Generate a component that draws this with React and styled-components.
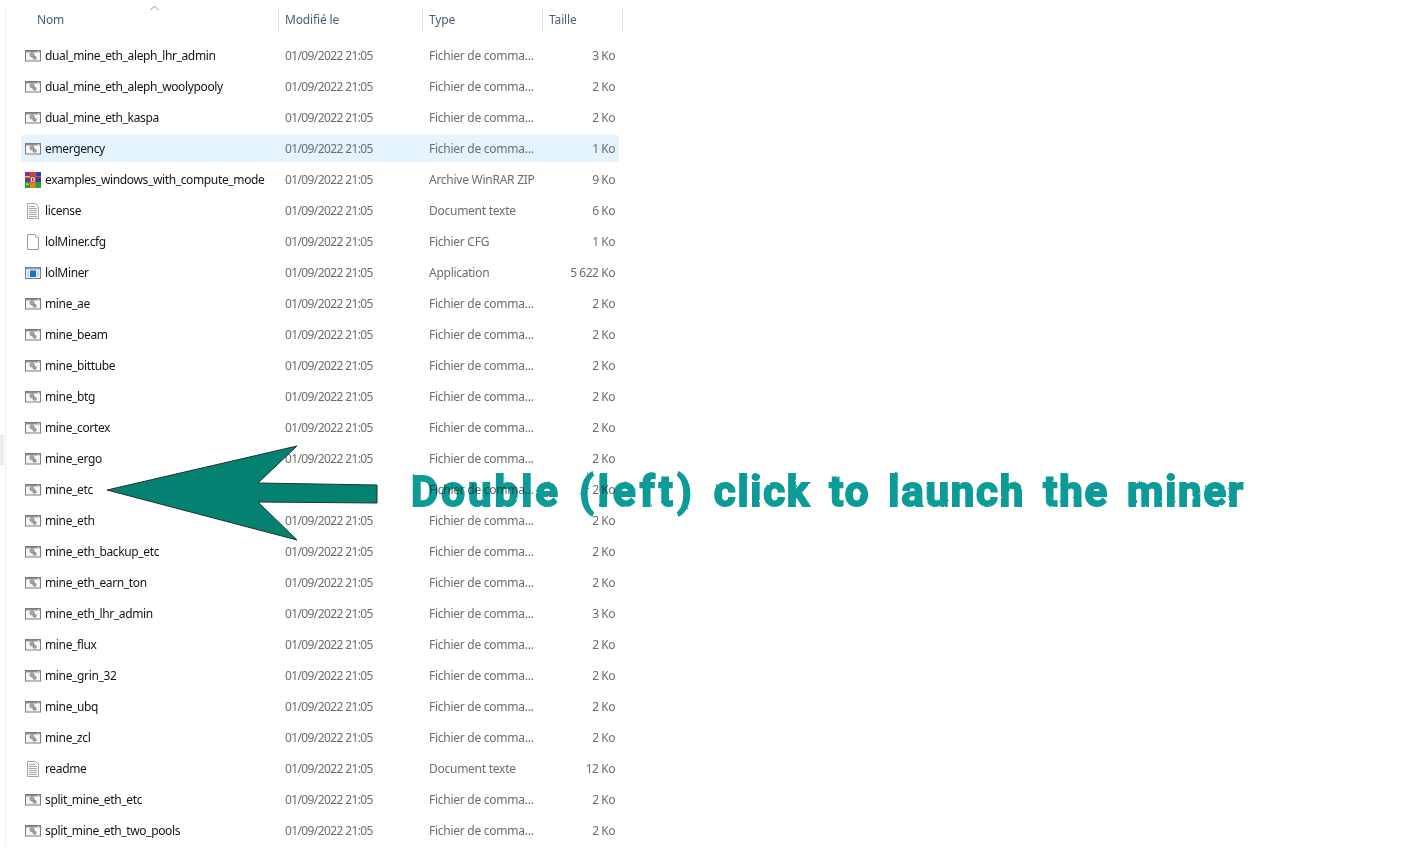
import React from "react";
import styled, { createGlobalStyle } from "styled-components";

const Global = createGlobalStyle`
  html, body { margin: 0; background: #fff; }
  body { font-family: "Noto Sans", "Open Sans", sans-serif; font-size: 12px; overflow: hidden; }
`;

const Page = styled.div`
  position: relative;
  width: 1410px;
  height: 858px;
  padding: 7px 0 0 5px;
  box-sizing: border-box;
  overflow: hidden;
`;

const Explorer = styled.div`
  width: 618px;
  height: 838px;
  border-left: 1px solid #f2f2f2;
`;

const Header = styled.div`
  display: grid;
  grid-template-columns: 273px 144px 120px 80px;
  height: 25px;
  margin-bottom: 10px;
`;

const HeaderCell = styled.div`
  position: relative;
  padding-left: ${(p) => p.$pad}px;
  border-right: 1px solid #e5e5e5;
  color: #4c607a;
  line-height: 25px;
  letter-spacing: -0.15px;
`;

const SortMark = styled.svg`
  position: absolute;
  left: 144px;
  top: -2px;
  width: 9px;
  height: 6px;
`;

const List = styled.div`
  display: flex;
  flex-direction: column;
  gap: 4px;
  padding-left: 15px;
`;

const Row = styled.div`
  display: grid;
  grid-template-columns: 24px 234px 144px 110px 86px;
  align-items: center;
  width: 598px;
  height: 27px;
  border-radius: 2px;
  background: ${(p) => (p.$selected ? "#e5f3ff" : "transparent")};
  line-height: 27px;
  white-space: nowrap;
`;

const IconCell = styled.div`
  display: flex;
  justify-content: flex-end;
  padding-right: 4px;
  align-items: center;
`;

const NameCell = styled.div`
  color: #151515;
  letter-spacing: -0.36px;
`;

const DateCell = styled.div`
  padding-left: 6px;
  color: #6d6d6d;
  letter-spacing: -0.62px;
`;

const TypeCell = styled.div`
  padding-left: 6px;
  color: #6d6d6d;
  letter-spacing: -0.26px;
`;

const SizeCell = styled.div`
  color: #6d6d6d;
  text-align: right;
  padding-right: 4px;
  letter-spacing: -0.45px;
`;

const Arrow = styled.svg`
  position: absolute;
  left: 100px;
  top: 440px;
  width: 285px;
  height: 106px;
`;

const Callout = styled.div`
  position: absolute;
  left: 411px;
  top: 464px;
  color: #0a9b97;
  font-family: "Roboto", sans-serif;
  font-weight: 700;
  font-size: 42px;
  line-height: 56px;
  letter-spacing: 1.76px;
  word-spacing: 6px;
  white-space: nowrap;
  -webkit-text-stroke: 1.8px #0a9b97;
  mix-blend-mode: multiply;
  filter: url(#rough);
`;

const Word = styled.span`
  letter-spacing: ${(p) => p.$spacing}px;
`;

const SideTick = styled.div`
  position: absolute;
  left: 0;
  top: 435px;
  width: 4px;
  height: 30px;
  background: #ececec;
`;

const BatchIcon = () => (
  <svg width="16" height="16" viewBox="0 0 16 16">
    <rect x="0.5" y="2.5" width="15" height="10.5" fill="#f6f6f6" stroke="#7c7c7c" />
    <rect x="1" y="3" width="14" height="1.4" fill="#8c8c8c" />
    <rect x="12.6" y="3.2" width="1.6" height="1" fill="#eee" />
    <circle cx="7" cy="6.8" r="2.1" fill="#a8a8a8" stroke="#858585" strokeWidth="0.8" />
    <circle cx="9.6" cy="9.8" r="1.5" fill="#b4b4b4" stroke="#6a6a6a" strokeWidth="0.8" />
  </svg>
);

const RarIcon = () => (
  <svg width="16" height="16" viewBox="0 0 16 16">
    <rect x="0" y="0" width="5" height="16" fill="#7a2f9f" />
    <rect x="5" y="0" width="5.5" height="16" fill="#d8402c" />
    <rect x="10.5" y="0" width="5.5" height="16" fill="#2f3fa7" />
    <rect x="0" y="10" width="16" height="6" fill="#2e9f3e" />
    <rect x="5" y="10" width="5.5" height="6" fill="#ec7f1d" />
    <rect x="0" y="4" width="5" height="1.5" fill="#e8c52c" />
    <rect x="10.5" y="4" width="5.5" height="1.5" fill="#d8483a" />
    <rect x="1" y="11.5" width="2.5" height="1.5" fill="#e8d040" />
    <rect x="5.5" y="5" width="4.5" height="5" fill="#f4ece0" stroke="#8a3a20" strokeWidth="0.6" />
    <rect x="7" y="6" width="1.4" height="3" fill="#b03020" />
  </svg>
);

const TextIcon = () => (
  <svg width="16" height="16" viewBox="0 0 16 16">
    <path d="M2.5 0.5H10.5L13.5 3.5V15.5H2.5Z" fill="#fbfbfb" stroke="#a5a5a5" />
    <path d="M4 3.5H10M4 5.5H12M4 7.5H12M4 9.5H12M4 11.5H12M4 13.5H12" stroke="#a8a8a8" />
  </svg>
);

const BlankIcon = () => (
  <svg width="16" height="16" viewBox="0 0 16 16">
    <path d="M2.5 0.5H10.5L13.5 3.5V15.5H2.5Z" fill="#fff" stroke="#9a9a9a" />
    <path d="M10.5 0.5V3.5H13.5" fill="#f0f0f0" stroke="#c0c0c0" />
  </svg>
);

const AppIcon = () => (
  <svg width="16" height="16" viewBox="0 0 16 16">
    <rect x="0.5" y="2.5" width="15" height="11" fill="#eef3f8" stroke="#78828c" />
    <rect x="1" y="3" width="14" height="1.5" fill="#9aa2aa" />
    <rect x="5" y="5.5" width="6" height="6.5" fill="#1276c9" />
    <rect x="2" y="6" width="2" height="5.5" fill="#c4d4e4" />
    <rect x="12" y="6" width="2" height="5.5" fill="#c4d4e4" />
  </svg>
);

const icons = { bat: BatchIcon, rar: RarIcon, txt: TextIcon, cfg: BlankIcon, exe: AppIcon };
const CMD = "Fichier de comma...";
const files = [
  ["dual_mine_eth_aleph_lhr_admin", "bat", CMD, "3 Ko"],
  ["dual_mine_eth_aleph_woolypooly", "bat", CMD, "2 Ko"],
  ["dual_mine_eth_kaspa", "bat", CMD, "2 Ko"],
  ["emergency", "bat", CMD, "1 Ko", true],
  ["examples_windows_with_compute_mode", "rar", "Archive WinRAR ZIP", "9 Ko"],
  ["license", "txt", "Document texte", "6 Ko"],
  ["lolMiner.cfg", "cfg", "Fichier CFG", "1 Ko"],
  ["lolMiner", "exe", "Application", "5 622 Ko"],
  ["mine_ae", "bat", CMD, "2 Ko"],
  ["mine_beam", "bat", CMD, "2 Ko"],
  ["mine_bittube", "bat", CMD, "2 Ko"],
  ["mine_btg", "bat", CMD, "2 Ko"],
  ["mine_cortex", "bat", CMD, "2 Ko"],
  ["mine_ergo", "bat", CMD, "2 Ko"],
  ["mine_etc", "bat", CMD, "2 Ko"],
  ["mine_eth", "bat", CMD, "2 Ko"],
  ["mine_eth_backup_etc", "bat", CMD, "2 Ko"],
  ["mine_eth_earn_ton", "bat", CMD, "2 Ko"],
  ["mine_eth_lhr_admin", "bat", CMD, "3 Ko"],
  ["mine_flux", "bat", CMD, "2 Ko"],
  ["mine_grin_32", "bat", CMD, "2 Ko"],
  ["mine_ubq", "bat", CMD, "2 Ko"],
  ["mine_zcl", "bat", CMD, "2 Ko"],
  ["readme", "txt", "Document texte", "12 Ko"],
  ["split_mine_eth_etc", "bat", CMD, "2 Ko"],
  ["split_mine_eth_two_pools", "bat", CMD, "2 Ko"],
];

export default function App() {
  return (
    <Page>
      <Global />
      <svg width="0" height="0" style={{ position: "absolute" }}>
        <filter id="rough">
          <feTurbulence type="fractalNoise" baseFrequency="0.25" numOctaves="2" seed="3" />
          <feDisplacementMap in="SourceGraphic" scale="2" />
        </filter>
      </svg>
      <SideTick />
      <Explorer>
        <Header>
          <HeaderCell $pad={31}>
            Nom
            <SortMark viewBox="0 0 9 6">
              <path d="M0.5 5L4.5 1L8.5 5" fill="none" stroke="#8a8a8a" />
            </SortMark>
          </HeaderCell>
          <HeaderCell $pad={6}>Modifié le</HeaderCell>
          <HeaderCell $pad={6}>Type</HeaderCell>
          <HeaderCell $pad={6}>Taille</HeaderCell>
        </Header>
        <List>
          {files.map(([name, icon, type, size, selected]) => {
            const Icon = icons[icon];
            return (
              <Row key={name} $selected={selected}>
                <IconCell><Icon /></IconCell>
                <NameCell>{name}</NameCell>
                <DateCell>01/09/2022 21:05</DateCell>
                <TypeCell>{type}</TypeCell>
                <SizeCell>{size}</SizeCell>
              </Row>
            );
          })}
        </List>
      </Explorer>
      <Arrow viewBox="100 440 285 106">
        <path d="M107 490L297 446L258 483L377 485V503L258 502L297 540Z" fill="#058172" stroke="#1f3330" strokeWidth="1" />
      </Arrow>
      <Callout>
        <Word $spacing={3}>Double</Word> <Word $spacing={4}>(left)</Word> click to launch the miner
      </Callout>
    </Page>
  );
}
